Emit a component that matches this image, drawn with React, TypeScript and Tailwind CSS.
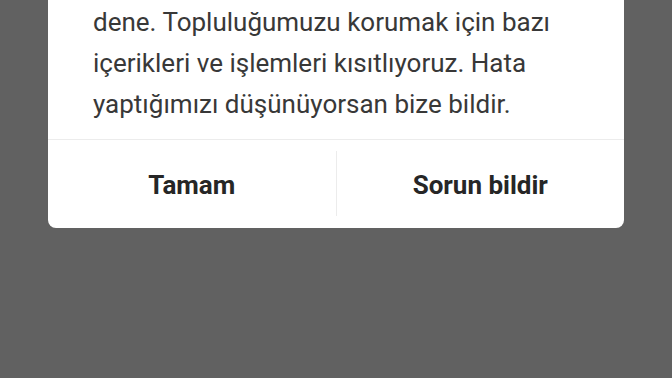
export default function App() {
  return (
    <div className="h-[378px] w-[672px] overflow-hidden bg-[#616161]" style={{ fontFamily: 'Roboto, "Noto Sans", sans-serif' }}>
      <div className="mx-[48px] -mt-[6px] rounded-b-[8px] bg-white">
        {/* Message */}
        <p className="px-[45px] pt-[8px] pb-[14px] text-[26px] leading-[41px] text-[#383838]">
          dene. Topluluğumuzu korumak için bazı içerikleri ve işlemleri kısıtlıyoruz. Hata yaptığımızı düşünüyorsan bize bildir.
        </p>

        {/* Actions */}
        <div className="flex h-[89px] items-center border-t border-[#ececec]">
          <button className="flex-1 pt-[3px] text-[26px] font-bold text-[#262626]">Tamam</button>
          <div className="mt-[11px] h-[65px] w-px self-start bg-[#ececec]" />
          <button className="flex-1 pt-[3px] text-[26px] font-bold text-[#262626]">Sorun bildir</button>
        </div>
      </div>
    </div>
  )
}
